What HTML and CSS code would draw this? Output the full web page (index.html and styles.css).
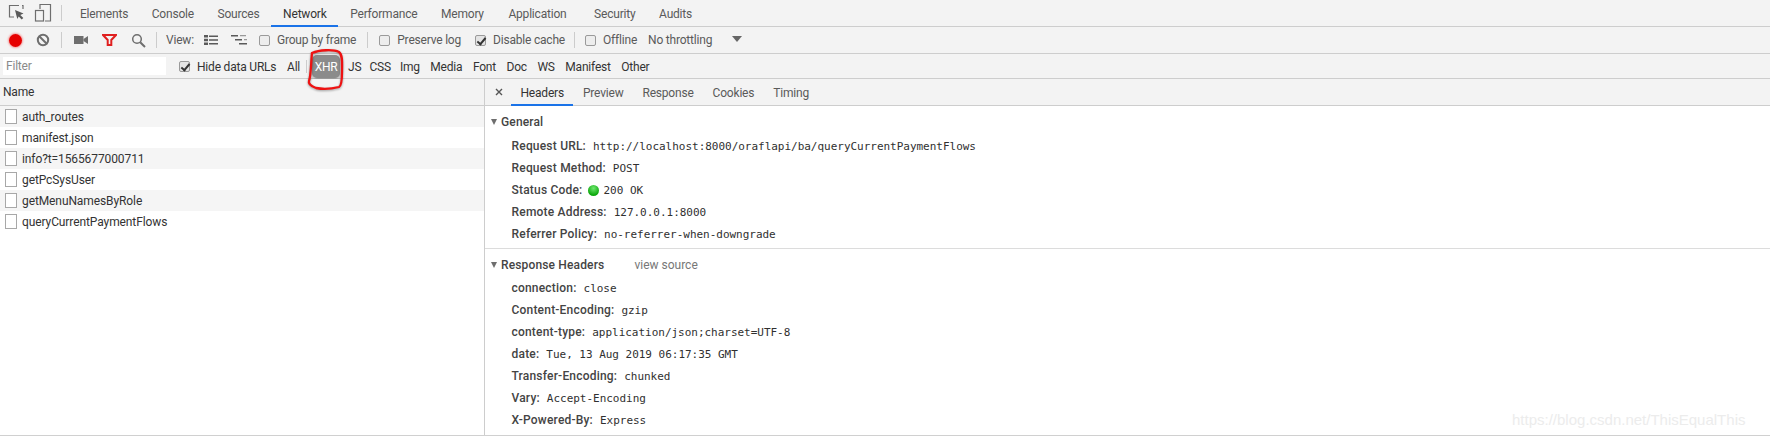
FILE: index.html
```html
<!DOCTYPE html>
<html lang="en">
<head>
<meta charset="utf-8">
<title>DevTools Network</title>
<link rel="stylesheet" href="styles.css">
</head>
<body>
<div class="app">
  <div class="bar tabs">
    <svg class="ic ic-inspect" width="20" height="20" viewBox="0 0 20 20"><path d="M12 2.500H2.500v11.500H7" fill="none" stroke="#6e6e6e" stroke-width="1.200"/><path d="M15 2.500h1V6" fill="none" stroke="#6e6e6e" stroke-width="1.200"/><path d="M8 7l8.500 3.500-3.200 1.400 3 3-1.600 1.600-3-3L10.300 16z" fill="#5a5a5a"/></svg>
    <svg class="ic ic-device" width="18" height="20" viewBox="0 0 18 20"><path d="M6 6V1.500h10.500v16.500H11" fill="none" stroke="#6e6e6e" stroke-width="1.200"/><rect x="1.500" y="7.500" width="8" height="10.500" fill="none" stroke="#6e6e6e" stroke-width="1.200"/></svg>
    <span class="sep sep-tabs"></span>
    <span class="tab">Elements</span><span class="tab">Console</span><span class="tab">Sources</span><span class="tab on">Network</span><span class="tab">Performance</span><span class="tab">Memory</span><span class="tab tab-app">Application</span><span class="tab">Security</span><span class="tab">Audits</span>
  </div>

  <div class="bar tools">
    <span class="record"></span>
    <svg class="ic ic-block" width="14" height="14" viewBox="0 0 14 14"><circle cx="7" cy="7" r="5.200" fill="none" stroke="#6e6e6e" stroke-width="2"/><path d="M3.300 3.300l7.400 7.400" stroke="#6e6e6e" stroke-width="2"/></svg>
    <span class="sep sep-a"></span>
    <svg class="ic ic-cam" width="14" height="10" viewBox="0 0 14 10"><rect x="0" y="1" width="9.500" height="8" fill="#6e6e6e"/><path d="M9.500 4L14 1v8L9.500 6z" fill="#6e6e6e"/></svg>
    <svg class="ic ic-filter" width="15" height="12" viewBox="0 0 15 12"><path d="M1 1h13L9.300 6v5H5.700V6z" fill="none" stroke="#e02020" stroke-width="2"/></svg>
    <svg class="ic ic-search" width="15" height="15" viewBox="0 0 15 15"><circle cx="6" cy="6" r="4.300" fill="none" stroke="#6e6e6e" stroke-width="1.500"/><path d="M9.200 9.200L14 14" stroke="#6e6e6e" stroke-width="2"/></svg>
    <span class="sep sep-b"></span>
    <span class="lbl view">View:</span>
    <svg class="ic ic-list" width="14" height="10" viewBox="0 0 14 10"><path d="M0 0h4v2.500H0zM0 3.700h4v2.600H0zM0 7.500h4V10H0z" fill="#5a5a5a"/><path d="M5 .5h9V2H5zM5 4.200h9v1.500H5zM5 8h9v1.500H5z" fill="#5a5a5a"/></svg>
    <svg class="ic ic-fall" width="16" height="10" viewBox="0 0 16 10"><path d="M0 0h7v1.600H0zM4 4h7v1.600H4zM8 8h8v1.600H8z" fill="#5a5a5a"/><path d="M9 0h6v1.300H9zM13 4h3v1.300h-3z" fill="#999"/></svg>
    <span class="box box-group"></span><span class="lbl">Group by frame</span>
    <span class="sep sep-c"></span>
    <span class="box box-preserve"></span><span class="lbl">Preserve log</span>
    <span class="box checked box-cache"></span><span class="lbl">Disable cache</span>
    <span class="sep sep-d"></span>
    <span class="box box-off"></span><span class="lbl">Offline</span>
    <span class="lbl throttle">No throttling</span>
    <span class="arrow"></span>
  </div>

  <div class="bar filters">
    <span class="input">Filter</span>
    <span class="box checked box-hide"></span><span class="hide">Hide data URLs</span>
    <span class="ft">All</span>
    <span class="sep sep-f"></span>
    <span class="ft xhr">XHR</span>
    <span class="ft">JS</span><span class="ft ft-css">CSS</span><span class="ft ft-img">Img</span><span class="ft">Media</span><span class="ft">Font</span><span class="ft">Doc</span><span class="ft">WS</span><span class="ft">Manifest</span><span class="ft">Other</span>
  </div>

  <div class="split">
    <div class="left">
      <div class="name-head">Name</div>
      <div class="req alt"><span class="file"></span>auth_routes</div>
      <div class="req"><span class="file"></span>manifest.json</div>
      <div class="req alt"><span class="file"></span>info?t=1565677000711</div>
      <div class="req"><span class="file"></span>getPcSysUser</div>
      <div class="req alt"><span class="file"></span>getMenuNamesByRole</div>
      <div class="req"><span class="file"></span>queryCurrentPaymentFlows</div>
    </div>
    <div class="right">
      <div class="subtabs">
        <svg class="close" width="8" height="8" viewBox="0 0 8 8"><path d="M1 1l6 6M7 1L1 7" stroke="#555" stroke-width="1.400"/></svg>
        <span class="stab on">Headers</span><span class="stab">Preview</span><span class="stab">Response</span><span class="stab">Cookies</span><span class="stab">Timing</span>
      </div>
      <section class="sec sec-general">
        <div class="sec-title"><span class="tri"></span>General</div>
        <div class="kv"><b>Request URL:</b><code>http://localhost:8000/oraflapi/ba/queryCurrentPaymentFlows</code></div>
        <div class="kv"><b>Request Method:</b><code>POST</code></div>
        <div class="kv"><b>Status Code:</b><span class="dot"></span><code class="after-dot">200 OK</code></div>
        <div class="kv"><b>Remote Address:</b><code>127.0.0.1:8000</code></div>
        <div class="kv"><b>Referrer Policy:</b><code>no-referrer-when-downgrade</code></div>
      </section>
      <section class="sec sec-resp">
        <div class="sec-title"><span class="tri"></span>Response Headers<span class="src">view source</span></div>
        <div class="kv"><b>connection:</b><code>close</code></div>
        <div class="kv"><b>Content-Encoding:</b><code>gzip</code></div>
        <div class="kv"><b>content-type:</b><code>application/json;charset=UTF-8</code></div>
        <div class="kv"><b>date:</b><code>Tue, 13 Aug 2019 06:17:35 GMT</code></div>
        <div class="kv"><b>Transfer-Encoding:</b><code>chunked</code></div>
        <div class="kv"><b>Vary:</b><code>Accept-Encoding</code></div>
        <div class="kv"><b>X-Powered-By:</b><code>Express</code></div>
      </section>
    </div>
  </div>
  <svg class="scribble" width="44" height="50" viewBox="0 0 44 50"><path d="M7 5C14 2 28 1 34 4C38 7 37 16 37 24C37 32 36 38 34 39C26 41 16 41 11 40C6 38 3 36 4 33C6 28 6 14 7 5Z" fill="none" stroke="#ee1111" stroke-width="2.300"/></svg>
  <div class="mark">https://blog.csdn.net/ThisEqualThis</div>
</div>
</body>
</html>
```
FILE: styles.css
```css
* { box-sizing: border-box; }
html, body { margin: 0; padding: 0; }
body { width: 1770px; height: 438px; overflow: hidden; background: #fff; font: 12px/1 Roboto, "Liberation Sans", sans-serif; letter-spacing: -.2px; color: #5a5a5a; }
.app { position: relative; width: 1770px; height: 438px; display: flex; flex-direction: column; }
.bar { display: flex; align-items: center; background: #f3f3f3; border-bottom: 1px solid #cdcdcd; flex: none; }
.ic { flex: none; display: block; }

.tabs { height: 27px; }
.ic-inspect { margin-left: 7px; }
.ic-device { margin-left: 7px; }
.sep { flex: none; width: 1px; height: 16px; background: #ccc; }
.sep-tabs { margin: 0 0 0 9px; }
.tab { height: 26px; padding: 0 11.800px; display: flex; align-items: center; margin-bottom: -1px; color: #5a5a5a; font-size: 12px; }
.sep-tabs + .tab { margin-left: 18px; padding-left: 0; }
.tab.on { color: #333; box-shadow: inset 0 -2px 0 #1a73e8; }
.tab-app { margin-left: 1px; margin-right: 4px; }

.tools { height: 27px; }
.record { flex: none; width: 13px; height: 13px; margin-left: 9px; border-radius: 50%; background: #e60000; box-shadow: 0 0 2px 1px #f4a0a0; }
.ic-block { margin-left: 14px; }
.sep-a { margin-left: 11px; }
.ic-cam { margin-left: 12px; }
.ic-filter { margin-left: 14px; }
.ic-search { margin-left: 14px; }
.sep-b { margin-left: 10px; }
.lbl { flex: none; color: #5a5a5a; white-space: nowrap; }
.view { margin-left: 9px; width: 31px; }
.ic-list { margin-left: 7px; }
.ic-fall { margin-left: 13px; }
.box { flex: none; width: 11px; height: 11px; border: 1px solid #9a9a9a; border-radius: 2px; background: #ededed; margin-right: 7px; position: relative; }
.box.checked { background: #e4e4e4; }
.box.checked::after { content: ""; position: absolute; left: 3px; top: 0; width: 3px; height: 7px; border: solid #333; border-width: 0 2px 2px 0; transform: rotate(40deg); }
.box-group { margin-left: 12px; }
.sep-c { margin-left: 11px; }
.box-preserve { margin-left: 11px; }
.box-cache { margin-left: 14px; }
.sep-d { margin-left: 9px; }
.box-off { margin-left: 10px; }
.throttle { margin-left: 11px; }
.arrow { flex: none; margin-left: 20px; margin-top: -2px; width: 0; height: 0; border: solid transparent; border-width: 6px 5px 0; border-top-color: #666; }

.filters { height: 25px; color: #333; white-space: nowrap; }
.input { flex: none; width: 163px; height: 18px; margin-left: 3px; padding: 3px 0 0 3px; background: #fff; color: #8a8a8a; }
.box-hide { margin-left: 13px; }
.hide { flex: none; width: 80px; padding-top: 1px; }
.ft { flex: none; margin-left: 10.500px; padding-top: 1px; }
.hide + .ft { margin-left: 10px; }
.sep-f { margin-left: 6px; height: 13px; }
.xhr { margin-left: 5px; width: 28px; height: 23px; padding-top: 0; line-height: 25px; text-align: center; border-radius: 5px; background: #8b8b8b; color: #fff; box-shadow: 0 2px 4px rgba(0,0,0,.35); }
.xhr + .ft { margin-left: 8px; }
.ft-css { margin-left: 8px; }
.ft-img { margin-left: 9px; }

.split { flex: 1; display: grid; grid-template-columns: 485px 1fr; min-height: 0; border-bottom: 1px solid #d0d0d0; margin-bottom: 2px; }
.left { border-right: 1px solid #cdcdcd; }
.name-head { height: 27px; padding: 0 0 0 3px; line-height: 26px; background: #f3f3f3; border-bottom: 1px solid #cdcdcd; color: #333; }
.req { height: 21px; display: flex; align-items: center; color: #333; letter-spacing: -.1px; }
.req.alt { background: #f5f5f5; }
.file { flex: none; width: 12px; height: 15px; margin: 0 5px 0 5px; border: 1px solid #a8a8a8; background: #fff; }

.subtabs { height: 27px; display: flex; align-items: stretch; background: #f3f3f3; border-bottom: 1px solid #cdcdcd; }
.close { align-self: center; margin-left: 10px; margin-right: 8px; }
.stab { display: flex; align-items: center; padding: 0 9.500px; margin-bottom: -1px; color: #5a5a5a; }
.stab.on { color: #333; box-shadow: inset 0 -2px 0 #1a73e8; }

.sec { padding-top: 7px; font-size: 12px; }
.sec-general { height: 143px; border-bottom: 1px solid #dcdcdc; }
.sec-title { height: 18px; display: flex; align-items: center; color: #444; font-weight: 500; padding-left: 6px; letter-spacing: .15px; }
.tri { flex: none; width: 0; height: 0; margin-right: 4px; border: solid transparent; border-width: 6px 3.500px 0; border-top-color: #6e6e6e; }
.src { margin-left: 30px; font-weight: 400; color: #777; letter-spacing: 0; }
.kv { height: 22px; display: flex; align-items: center; padding-left: 26.500px; color: #303030; }
.sec-title + .kv { margin-top: 3px; }
.sec-general .sec-title + .kv { margin-top: 4px; }
.kv b { flex: none; font-weight: 500; color: #444; letter-spacing: .2px; }
.kv code { font: 11px "DejaVu Sans Mono", "Liberation Mono", monospace; letter-spacing: -.02px; margin-left: 7px; color: #303030; }
.dot { flex: none; width: 11px; height: 11px; margin-left: 6px; border-radius: 50%; background: radial-gradient(circle at 50% 30%, #6fe86f, #0da80d 70%); }
.kv code.after-dot { margin-left: 4px; }

.scribble { position: absolute; left: 305px; top: 48px; pointer-events: none; filter: drop-shadow(0 1px 1px rgba(0,0,0,.35)); }
.mark { position: absolute; left: 1512px; top: 411px; font: 15px "Liberation Sans", sans-serif; letter-spacing: 0; color: #ececec; white-space: nowrap; }
```
